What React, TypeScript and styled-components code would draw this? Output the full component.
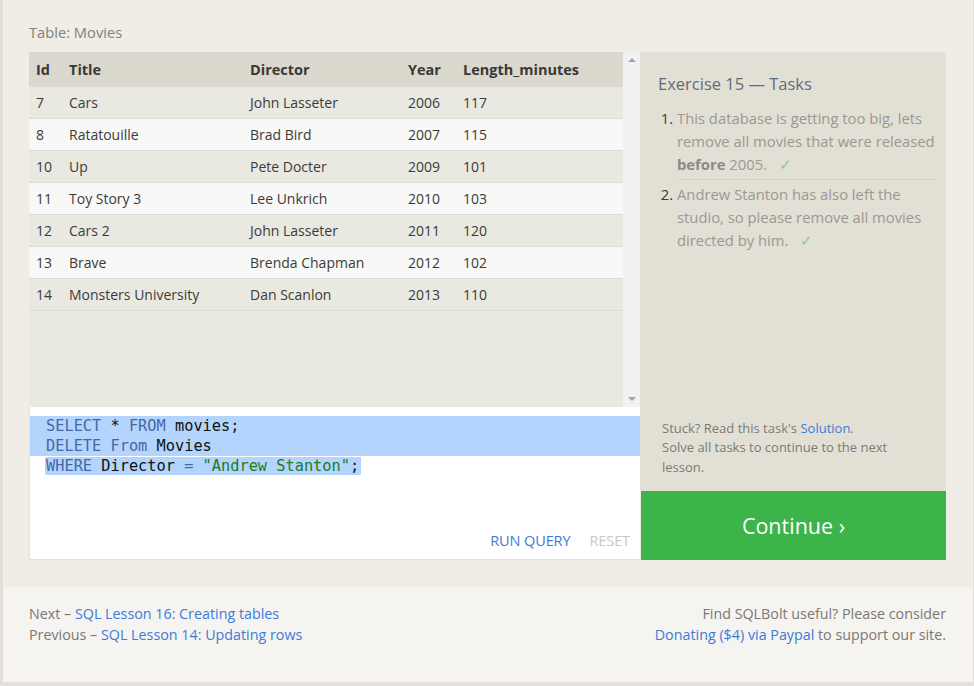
import React from "react";
import styled, { createGlobalStyle } from "styled-components";

const Global = createGlobalStyle`
  html, body { margin: 0; padding: 0; }
  body {
    background: #e3dfda;
    font-family: "Open Sans", "Noto Sans", sans-serif;
  }
`;

const Page = styled.div`
  margin: 0 1px 0 3px;
  padding-bottom: 4px;
`;

const Section = styled.section`
  background: #efede6;
  padding: 22px 27px 27px 26px;
`;

const TableLabel = styled.div`
  font-size: 14.7px;
  color: #85817a;
  line-height: 20px;
  height: 30px;
`;

const Workspace = styled.div`
  display: grid;
  grid-template-columns: 611px 306px;
`;

const LeftCol = styled.div`
  display: flex;
  flex-direction: column;
`;

const TableArea = styled.div`
  display: flex;
  height: 355px;
  background: #e9e8e1;
`;

const TableScroll = styled.div`
  flex: 1;
`;

const Table = styled.table`
  width: 100%;
  border-collapse: collapse;
  font-size: 14px;
  color: #3a3a3a;
`;

const Th = styled.th<{ $w?: number }>`
  background: #dbd9ce;
  text-align: left;
  font-weight: 700;
  font-size: 14.5px;
  height: 35px;
  padding: 0 0 0 7px;
  width: ${(p) => (p.$w ? `${p.$w}px` : "auto")};
  color: #3a3836;
  box-sizing: border-box;
`;

const Tr = styled.tr<{ $even: boolean }>`
  background: ${(p) => (p.$even ? "#f8f8f7" : "#e9e8e1")};
  border-bottom: 1px solid #dcdbd5;
`;

const Td = styled.td`
  height: 31px;
  padding: 0 0 0 7px;
  color: #3c3b39;
`;

const Scrollbar = styled.div`
  width: 17px;
  background: #f1f1f1;
  display: flex;
  flex-direction: column;
  justify-content: space-between;
  align-items: center;
  padding: 6px 0;
  box-sizing: border-box;
`;

const Arrow = styled.div<{ $down?: boolean }>`
  width: 0;
  height: 0;
  border-left: 4px solid transparent;
  border-right: 4px solid transparent;
  ${(p) =>
    p.$down
      ? "border-top: 4px solid #a3a3a3;"
      : "border-bottom: 4px solid #a3a3a3;"}
`;

const Editor = styled.div`
  height: 153px;
  background: #fff;
  border-left: 1px solid #e6e3dc;
  border-bottom: 1px solid #e3e0d8;
  box-sizing: border-box;
  padding-top: 9px;
  display: flex;
  flex-direction: column;
`;

const Code = styled.pre`
  margin: 0;
  font-family: "DejaVu Sans Mono", "Liberation Mono", monospace;
  font-size: 15.3px;
  line-height: 20px;
  color: #111;
  flex: 1;
`;

const Line = styled.div<{ $full?: boolean }>`
  padding-left: 16px;
  ${(p) => (p.$full ? "background: #b3d4fc;" : "")}
`;

const Sel = styled.span`
  background: #b3d4fc;
  margin-left: -1px;
  padding: 0 2px 0 1px;
  border-radius: 0 0 2px 2px;
`;

const Kw = styled.span`
  color: #4867a6;
`;

const Str = styled.span`
  color: #1d7b1d;
`;

const EditorActions = styled.div`
  display: flex;
  justify-content: flex-end;
  gap: 19px;
  padding: 0 10px 8px 0;
  font-size: 14.5px;
  line-height: 20px;
`;

const ActionBtn = styled.span<{ $disabled?: boolean }>`
  color: ${(p) => (p.$disabled ? "#c8c8c8" : "#3d7ad8")};
  letter-spacing: -0.1px;
`;

const RightCol = styled.div`
  display: flex;
  flex-direction: column;
`;

const TaskPanel = styled.div`
  flex: 1;
  background: #e2e0d5;
  border-top: 1px solid #e6e4dc;
  padding: 19px 5px 14px 18px;
  display: flex;
  flex-direction: column;
`;

const TaskTitle = styled.div`
  font-size: 16.5px;
  color: #5f6b7d;
  line-height: 24px;
  margin-bottom: 11px;
`;

const TaskList = styled.ol`
  margin: 0;
  padding: 0 0 0 19px;
  flex: 1;
`;

const TaskItem = styled.li<{ $last?: boolean }>`
  font-size: 14.8px;
  line-height: 23px;
  color: #9a9893;
  padding-bottom: ${(p) => (p.$last ? "0" : "3px")};
  margin-bottom: ${(p) => (p.$last ? "0" : "3px")};
  border-bottom: ${(p) => (p.$last ? "none" : "1px solid #d6d4c9")};
  margin-right: ${(p) => (p.$last ? "0" : "3px")};
  &::marker {
    color: #3c3a37;
  }
  b {
    color: #8c8a85;
  }
`;

const Check = styled.span`
  color: #86cd90;
  margin-left: 12px;
`;

const Stuck = styled.div`
  font-size: 13px;
  line-height: 19.5px;
  color: #7c7a75;
  padding-left: 4px;
  max-width: 240px;
`;

const Link = styled.a`
  color: #3d7ad8;
  text-decoration: none;
`;

const ContinueBtn = styled.button`
  height: 69px;
  border: none;
  margin: 0 0 0 1px;
  background: #3bb44a;
  color: #fff;
  font-family: inherit;
  font-size: 21.5px;
  cursor: pointer;
`;

const Footer = styled.footer`
  background: #f5f4f0;
  height: 95px;
  box-sizing: border-box;
  padding: 16px 27px 0 26px;
  display: flex;
  justify-content: space-between;
  font-size: 14.3px;
  line-height: 21px;
  color: #7b7873;
`;

const FooterRight = styled.div`
  text-align: right;
`;

const rows: [number, string, string, number, number][] = [
  [7, "Cars", "John Lasseter", 2006, 117],
  [8, "Ratatouille", "Brad Bird", 2007, 115],
  [10, "Up", "Pete Docter", 2009, 101],
  [11, "Toy Story 3", "Lee Unkrich", 2010, 103],
  [12, "Cars 2", "John Lasseter", 2011, 120],
  [13, "Brave", "Brenda Chapman", 2012, 102],
  [14, "Monsters University", "Dan Scanlon", 2013, 110],
];

export default function App() {
  return (
    <>
      <Global />
      <Page>
        <Section>
          <TableLabel>Table: Movies</TableLabel>
          <Workspace>
            <LeftCol>
              <TableArea>
                <TableScroll>
                  <Table>
                    <thead>
                      <tr>
                        <Th $w={33}>Id</Th>
                        <Th $w={181}>Title</Th>
                        <Th $w={158}>Director</Th>
                        <Th $w={55}>Year</Th>
                        <Th>Length_minutes</Th>
                      </tr>
                    </thead>
                    <tbody>
                      {rows.map((r, i) => (
                        <Tr key={r[0]} $even={i % 2 === 1}>
                          <Td>{r[0]}</Td>
                          <Td>{r[1]}</Td>
                          <Td>{r[2]}</Td>
                          <Td>{r[3]}</Td>
                          <Td>{r[4]}</Td>
                        </Tr>
                      ))}
                    </tbody>
                  </Table>
                </TableScroll>
                <Scrollbar>
                  <Arrow />
                  <Arrow $down />
                </Scrollbar>
              </TableArea>
              <Editor>
                <Code>
                  <Line $full>
                    <Kw>SELECT</Kw> * <Kw>FROM</Kw> movies;
                  </Line>
                  <Line $full>
                    <Kw>DELETE</Kw> <Kw>From</Kw> Movies
                  </Line>
                  <Line>
                    <Sel>
                      <Kw>WHERE</Kw> Director <Kw>=</Kw>{" "}
                      <Str>"Andrew Stanton"</Str>;
                    </Sel>
                  </Line>
                </Code>
                <EditorActions>
                  <ActionBtn>RUN QUERY</ActionBtn>
                  <ActionBtn $disabled>RESET</ActionBtn>
                </EditorActions>
              </Editor>
            </LeftCol>
            <RightCol>
              <TaskPanel>
                <TaskTitle>Exercise 15 — Tasks</TaskTitle>
                <TaskList>
                  <TaskItem>
                    This database is getting too big, lets remove all movies
                    that were released <b>before</b> 2005.
                    <Check>✓</Check>
                  </TaskItem>
                  <TaskItem $last>
                    Andrew Stanton has also left the studio, so please remove
                    all movies directed by him.
                    <Check>✓</Check>
                  </TaskItem>
                </TaskList>
                <Stuck>
                  Stuck? Read this task's <Link href="#">Solution</Link>.
                  <br />
                  Solve all tasks to continue to the next lesson.
                </Stuck>
              </TaskPanel>
              <ContinueBtn>Continue ›</ContinueBtn>
            </RightCol>
          </Workspace>
        </Section>
        <Footer>
          <div>
            Next – <Link href="#">SQL Lesson 16: Creating tables</Link>
            <br />
            Previous – <Link href="#">SQL Lesson 14: Updating rows</Link>
          </div>
          <FooterRight>
            Find SQLBolt useful? Please consider
            <br />
            <Link href="#">Donating ($4) via Paypal</Link> to support our site.
          </FooterRight>
        </Footer>
      </Page>
    </>
  );
}
